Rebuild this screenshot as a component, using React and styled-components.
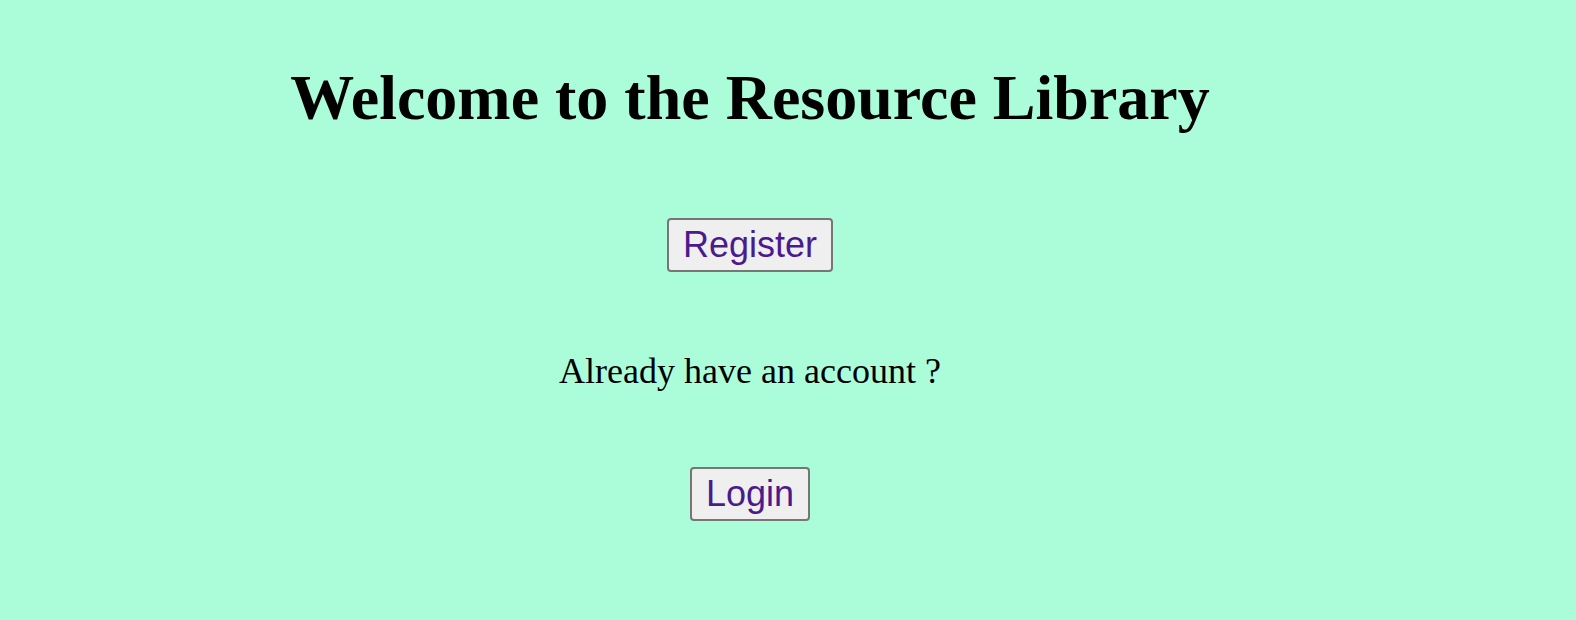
import styled, { createGlobalStyle } from "styled-components";

const GlobalStyle = createGlobalStyle`
    html, body {
        margin: 0;
        padding: 0;
        background: #abfcd9;
    }
    body {
        min-height: 620px;
        font-family: "Liberation Serif", "Times New Roman", serif;
    }
`;

export default function App() {
    return (
        <>
            <GlobalStyle />
            <Page>
                <Title>Welcome to the Resource Library</Title>
                <ActionButton>Register</ActionButton>
                <Question>Already have an account ?</Question>
                <ActionButton>Login</ActionButton>
            </Page>
        </>
    );
}

const Page = styled.div`
    display: flex;
    flex-direction: column;
    align-items: center;
    padding: 61px 76px 0 0;
    text-align: center;
`;

const Title = styled.h1`
    margin: 0 0 83px;
    font-family: "Liberation Serif", "Times New Roman", serif;
    font-size: 64px;
    font-weight: 700;
    line-height: normal;
    color: #000;
`;

const ActionButton = styled.button`
    font-family: "Liberation Sans", Arial, sans-serif;
    font-size: 36px;
    line-height: normal;
    color: #4b1a8c;
    background: #efefef;
    border: 2px solid #767676;
    border-radius: 4px;
    padding: 4px 14px;
    cursor: pointer;
`;

const Question = styled.p`
    margin: 78px 0 75px;
    font-size: 36px;
    line-height: normal;
    color: #000;
`;
